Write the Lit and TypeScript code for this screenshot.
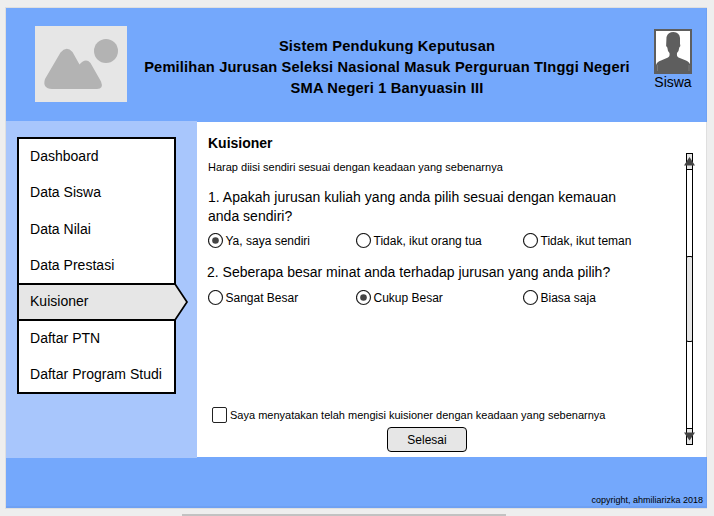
import { LitElement, html, css, svg } from "lit";
import { customElement, property } from "lit/decorators.js";
import { classMap } from "lit/directives/class-map.js";

@customElement("side-menu")
class SideMenu extends LitElement {
  @property() active = "";
  static styles = css`
    :host { display: block; }
    .menu {
      box-sizing: border-box; width: 159px; height: 257px;
      border: 2px solid #000; background: #fff;
      display: grid; grid-template-rows: 36px 37px 36px 36px 37px 36px 35px;
      font-size: 14px; line-height: 16px; letter-spacing: 0.02px;
    }
    .item { padding: 9px 0 0 11px; white-space: nowrap; }
    .item.on { position: relative; }
    .label { position: relative; }
    .arrow { position: absolute; left: -2px; top: -1px; width: 172px; height: 39px; overflow: visible; }
  `;
  render() {
    const items = ["Dashboard", "Data Siswa", "Data Nilai", "Data Prestasi", "Kuisioner", "Daftar PTN", "Daftar Program Studi"];
    return html`<nav class="menu">${items.map((t) => {
      const on = t === this.active;
      return html`<div class=${classMap({ item: true, on })}>
        ${on ? html`<svg class="arrow" viewBox="0 0 172 39">
          <path d="M1 1H158L170 19L158 37H1Z" fill="#e6e6e6"/>
          <path d="M0 1H158.500M158.500 37H0M1 1V38" fill="none" stroke="#000" stroke-width="2"/>
          <path d="M158 1L170 19L158 37" fill="none" stroke="#000" stroke-width="1.7"/></svg>` : ""}
        <span class="label">${t}</span></div>`;
    })}</nav>`;
  }
}

@customElement("radio-row")
class RadioRow extends LitElement {
  @property({ attribute: false }) options: string[] = [];
  @property({ type: Number }) selected = -1;
  static styles = css`
    :host { display: block; }
    .row { display: grid; grid-template-columns: 148px 167px 150px; height: 16px; }
    .opt { display: flex; align-items: center; gap: 1.5px; font-size: 12px; line-height: 16px; white-space: nowrap; }
    svg { width: 16px; height: 16px; flex: none; }
  `;
  render() {
    return html`<div class="row">${this.options.map((o, i) => html`<label class="opt">
      <svg viewBox="0 0 16 16"><circle cx="7.5" cy="7.5" r="7" fill="#fff" stroke="#222" stroke-width="1.2"/>
      ${i === this.selected ? svg`<circle cx="7.5" cy="7.5" r="3.3" fill="#444"/>` : ""}</svg>
      <span>${o}</span></label>`)}</div>`;
  }
}

@customElement("app-root")
class AppRoot extends LitElement {
  static styles = css`
    :host {
      display: block; box-sizing: border-box; width: 714px; height: 516px; overflow: hidden;
      background: #eee; color: #000; padding: 7px 0 0 5px;
      font-family: "Liberation Sans", Arial, sans-serif;
    }
    .page { box-sizing: border-box; width: 702px; height: 502px; border: 1px solid #dfdfdf; display: grid; grid-template-rows: 114px 335px 51px; }
    .header { background: #74a8fc; display: grid; grid-template-columns: 92px 1fr 38px; padding: 18px 14px 0 29px; border-right: 1px solid #6fa1f3; margin-right: -1px; }
    .logo { width: 92px; height: 76px; }
    .title { padding: 10px 7px 0 0; text-align: center; font-weight: bold; font-size: 14.67px; letter-spacing: 0.17px; line-height: 21px; white-space: nowrap; }
    .user { padding-top: 3px; display: flex; flex-direction: column; align-items: center; font-size: 14px; line-height: 16px; }
    .user svg { width: 38px; height: 45px; }
    .body { display: grid; grid-template-columns: 191px 1fr; }
    .side { background: #a8c6fc; padding: 16px 0 0 11px; margin: -1px 0; z-index: 1; }
    .main { background: #fff; display: grid; grid-template-columns: 1fr 12px; padding-right: 10px; }
    .content { padding: 12px 0 0 11px; display: flex; flex-direction: column; }
    h1 { margin: 0; font-size: 14px; line-height: 18px; }
    .hint { font-size: 11px; line-height: 14px; margin-top: 8px; white-space: nowrap; }
    .q { font-size: 14px; line-height: 18px; white-space: nowrap; }
    .q1 { margin-top: 14px; line-height: 19px; letter-spacing: 0.015px; }
    .r1 { margin-top: 7px; }
    .q2 { margin: 14px 0 0 -1px; }
    .r2 { margin-top: 9px; }
    .agree { margin: 101px 0 0 4px; display: flex; gap: 3px; align-items: center; height: 16px; font-size: 11px; white-space: nowrap; }
    .box { box-sizing: border-box; width: 15px; height: 16px; border: 1.3px solid #222; border-radius: 2px; flex: none; }
    .btn {
      box-sizing: border-box; width: 80px; height: 25px; margin: 4px 0 0 179px; padding: 0;
      border: 1px solid #000; border-radius: 4px; background: #e6e6e6; color: #000; font: inherit; font-size: 12px;
    }
    .bar { width: 12px; height: 292px; margin-top: 31px; }
    .footer { box-sizing: border-box; background: #74a8fc; border: 0 solid #6fa1f3; border-width: 0 1px 2px 0; margin-right: -1px; display: flex; justify-content: flex-end; align-items: flex-end; padding: 0 3px 0; font-size: 9px; line-height: 11px; }
    .edge { width: 324px; height: 2px; margin: 5px 0 0 177px; background: #c2c2c2; }
  `;
  render() {
    return html`
      <div class="page">
        <header class="header">
          <svg class="logo" viewBox="0 0 92 76">
            <rect width="92" height="76" fill="#e6e6e6"/>
            <circle cx="71" cy="25" r="12" fill="#b3b3b3"/>
            <path d="M10 53L25.500 26.500Q31.500 19.500 37.500 26L44.500 38.500Q50.500 31.500 55.500 37L66 55.500Q69 63 62 63H17Q7 62.500 10 53Z" fill="#b3b3b3"/>
          </svg>
          <div class="title"><div>Sistem Pendukung Keputusan</div><div>Pemilihan Jurusan Seleksi Nasional Masuk Perguruan TInggi Negeri</div><div>SMA Negeri 1 Banyuasin III</div></div>
          <div class="user">
            <svg viewBox="0 0 38 45">
              <rect x="1" y="1" width="36" height="43" fill="#fff" stroke="#5e5e5e" stroke-width="2"/>
              <path d="M2 44V36Q3 32.500 7 31.500L14 28.500Q16 27.500 15.500 24Q13.500 22 13.300 18.500Q11.500 17 12.200 15L12.500 8Q14 3 19.500 3Q25.500 3.500 26 9V14.500Q27 17 25.300 18.500Q25 22 23 24Q22.500 27.500 24.500 28.500L32 31.500Q36 33 36.500 37V44Z" fill="#5e5e5e"/>
              <path d="M3.500 36V42M35 36V42" stroke="#8a8a8a" stroke-width=".6"/>
            </svg>
            <span>Siswa</span>
          </div>
        </header>
        <div class="body">
          <aside class="side"><side-menu active="Kuisioner"></side-menu></aside>
          <main class="main">
            <section class="content">
              <h1>Kuisioner</h1>
              <div class="hint">Harap diisi sendiri sesuai dengan keadaan yang sebenarnya</div>
              <div class="q q1">1. Apakah jurusan kuliah yang anda pilih sesuai dengan kemauan<br>anda sendiri?</div>
              <radio-row class="r1" .options=${["Ya, saya sendiri", "Tidak, ikut orang tua", "Tidak, ikut teman"]} .selected=${0}></radio-row>
              <div class="q q2">2. Seberapa besar minat anda terhadap jurusan yang anda pilih?</div>
              <radio-row class="r2" .options=${["Sangat Besar", "Cukup Besar", "Biasa saja"]} .selected=${1}></radio-row>
              <label class="agree"><span class="box"></span><span>Saya menyatakan telah mengisi kuisioner dengan keadaan yang sebenarnya</span></label>
              <button class="btn">Selesai</button>
            </section>
            <svg class="bar" viewBox="0 0 12 292">
              <rect x="2.500" y=".5" width="6" height="291" fill="#fff" stroke="#000"/>
              <path d="M3 1H8V16H3ZM3 276H8V291H3Z" fill="#e6e6e6"/>
              <path d="M3 16.500H8M3 275.500H8" stroke="#000"/>
              <rect x="2.500" y="103.500" width="6" height="85" rx="1.500" fill="#e6e6e6" stroke="#000"/>
              <path d="M5.500 4L11 12.500H0ZM5.500 287.500L11 279.500H0Z" fill="#444"/>
            </svg>
          </main>
        </div>
        <footer class="footer">copyright, ahmiliarizka 2018</footer>
      </div>
      <div class="edge"></div>`;
  }
}
